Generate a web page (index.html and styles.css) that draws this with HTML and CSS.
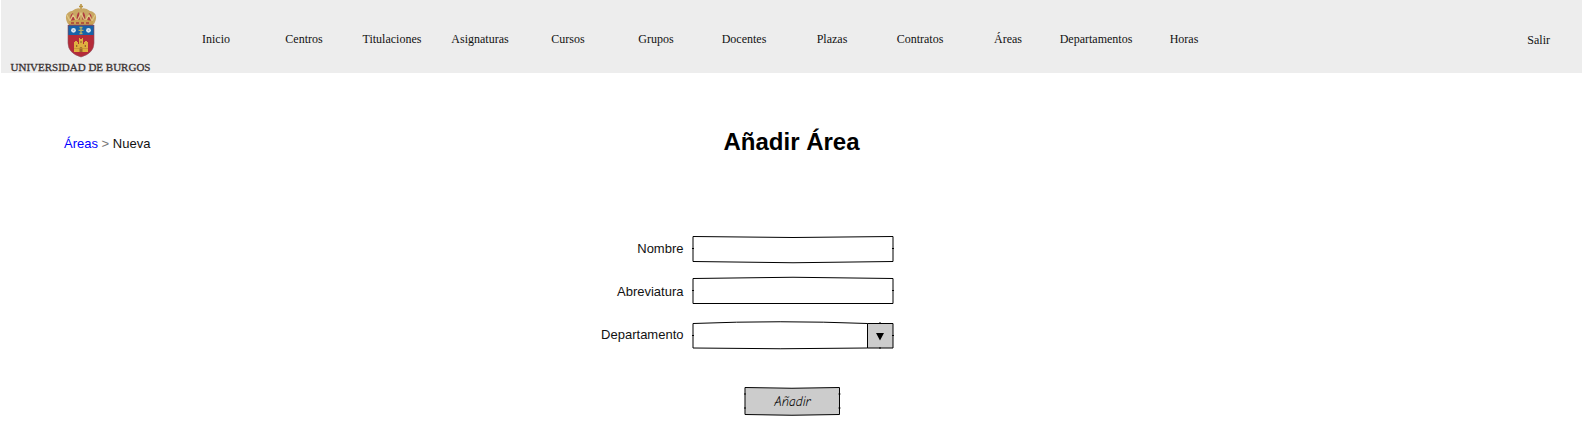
FILE: index.html
```html
<!DOCTYPE html>
<html lang="es">
<head>
<meta charset="utf-8">
<title>Añadir Área</title>
<link rel="stylesheet" href="styles.css">
</head>
<body>
<header class="topbar">
  <div class="brand">
    <svg class="crest" viewBox="0 0 32 54" aria-hidden="true">
      <path d="M16 0v6M14 2.500h4" stroke="#b99443" stroke-width="1.600"/>
      <path d="M3 20C-1 13 1 8 7 7Q12 3 16 5Q20 3 25 7C31 8 33 13 29 20Z" fill="#c9a764"/>
      <path d="M6 17Q4 11 8 9Q9 13 10 17ZM12 17Q11 10 14 8L15 17ZM20 17Q21 10 18 8L17 17ZM26 17Q28 11 24 9Q23 13 22 17Z" fill="#b03a40"/>
      <path d="M2 11l3 6 3-6 4 6 4-8 4 8 4-6 3 6 3-6" fill="none" stroke="#e0c884" stroke-width="1.200"/>
      <path d="M4 17Q16 14 28 17V21H4Z" fill="#c8a052"/>
      <path d="M6 19h20" stroke="#a83d38" stroke-width="1.500" stroke-dasharray="3 2"/>
      <path d="M3 21H29V39Q29 49 16 53Q3 49 3 39Z" fill="#b52b39" stroke="#8e5260" stroke-width=".6"/>
      <path d="M3.300 21.500H28.700V31H3.300Z" fill="#1763a8"/>
      <g fill="#dce6ef"><circle cx="8.500" cy="26.300" r="2.400"/><circle cx="23.500" cy="26.300" r="2.400"/></g>
      <g fill="#8fb0cc"><circle cx="8.500" cy="26.300" r=".8"/><circle cx="23.500" cy="26.300" r=".8"/></g>
      <path d="M16 23v7M13.500 26.300h5M14.500 23.500h3M14.500 29.500h3" stroke="#b7ae62" stroke-width="1.300"/>
      <path d="M9 48V38h1v-1h2v1h1v2h1v-6h1v1h2v-1h1v6h1v-2h1v-1h2v1h1V48Z" fill="#dfb040"/>
      <path d="M14.500 48v-4q1.500-2 3 0v4ZM11 41h1.300v2H11ZM19.700 41H21v2h-1.300ZM15.400 37h1.200v2h-1.200Z" fill="#9b6a2b"/>
      <path d="M9 44.500h14" stroke="#c18d35" stroke-width=".7"/>
    </svg>
    <span class="brand-name">UNIVERSIDAD DE BURGOS</span>
  </div>
  <nav class="menu">
    <a href="#">Inicio</a>
    <a href="#">Centros</a>
    <a href="#">Titulaciones</a>
    <a href="#">Asignaturas</a>
    <a href="#">Cursos</a>
    <a href="#">Grupos</a>
    <a href="#">Docentes</a>
    <a href="#">Plazas</a>
    <a href="#">Contratos</a>
    <a href="#">Áreas</a>
    <a href="#">Departamentos</a>
    <a href="#">Horas</a>
  </nav>
  <a class="logout" href="#">Salir</a>
</header>
<main>
  <div class="heading">
    <div class="breadcrumb"><a href="#">Áreas</a> <span class="sep">&gt;</span> <span>Nueva</span></div>
    <h1>Añadir Área</h1>
  </div>
  <form class="form">
    <label for="nombre">Nombre</label>
    <div class="field">
      <svg class="sketch" viewBox="0 0 202 28" preserveAspectRatio="none" aria-hidden="true">
        <path class="line" d="M1 1.500Q101 3.500 201 1.500V26.500Q101 29 1 26.500Z"/>
        <path class="line" d="M0 13.500h2M200 13.500h2"/>
      </svg>
      <input id="nombre" type="text">
    </div>
    <label for="abreviatura">Abreviatura</label>
    <div class="field">
      <svg class="sketch" viewBox="0 0 202 28" preserveAspectRatio="none" aria-hidden="true">
        <path class="line" d="M1 .5Q101 -2 201 .5V25.500H1Z"/>
        <path class="line" d="M0 12.500h2M200 12.500h2"/>
      </svg>
      <input id="abreviatura" type="text">
    </div>
    <label for="departamento">Departamento</label>
    <div class="field">
      <svg class="sketch" viewBox="0 0 202 28" preserveAspectRatio="none" aria-hidden="true">
        <path class="fill" d="M175.500 2.500H201V27H175.500Z"/>
        <path class="line" d="M1 2.500Q88 -1 175.500 2.500H201V27H175.500Q88 28.500 1 27ZM175.500 2.500V27"/>
        <path class="line" d="M0 14.500h2M200 14.500h2M188 1v2M188 26v2"/>
        <path d="M184 12h8l-4 7.500Z"/>
      </svg>
      <select id="departamento"><option></option></select>
    </div>
    <div class="actions">
      <button type="button">
        <svg class="sketch" viewBox="0 0 97 30" preserveAspectRatio="none" aria-hidden="true">
          <path class="fill line" d="M1 1.500Q48 3 96 1.500V28.500Q48 30 1 28.500Z"/>
          <path class="line" d="M0 8h2M0 22h2M95 8h2M95 22h2"/>
        </svg>
        <span class="caption">Añadir</span>
      </button>
    </div>
  </form>
</main>
</body>
</html>
```
FILE: styles.css
```css
* {
  box-sizing: border-box;
}

body {
  margin: 0;
  padding-left: 1px;
  background: #fff;
  color: #111;
  font-family: "Liberation Sans", Arial, sans-serif;
  font-size: 13px;
  line-height: 16px;
}

a {
  color: inherit;
  text-decoration: none;
}

.topbar {
  display: flex;
  align-items: center;
  min-height: 73px;
  padding-right: 32px;
  background: #ededed;
  font-family: "Liberation Serif", "Times New Roman", serif;
  font-size: 12px;
}

.brand {
  display: flex;
  flex-direction: column;
  align-items: center;
  align-self: stretch;
  width: 159px;
  padding-top: 4px;
}

.crest {
  width: 32px;
  height: 54px;
}

.brand-name {
  padding-top: 4px;
  font-size: 11px;
  line-height: 11px;
  white-space: nowrap;
  color: #3a3333;
  -webkit-text-stroke: 0.3px #3a3333;
}

.menu {
  display: flex;
  margin: 4px auto 0 12px;
}

.menu a {
  width: 88px;
  text-align: center;
}

.logout {
  padding-top: 6px;
}

.heading {
  display: grid;
  grid-template-columns: 1fr auto 1fr;
  align-items: center;
  padding: 53px 0 0;
}

.breadcrumb {
  padding: 4px 0 0 63px;
}

.breadcrumb a {
  color: #00f;
}

.sep {
  color: #777;
}

h1 {
  margin: 0;
  font-size: 24px;
  line-height: 32px;
  color: #000;
}

.form {
  display: grid;
  grid-template-columns: 1fr 202px 1fr;
  gap: 15px 8px;
  align-items: center;
  padding: 77px 0 24px 2px;
}

.form label {
  grid-column: 1;
  text-align: right;
}

.field {
  position: relative;
  grid-column: 2;
  height: 28px;
}

.sketch {
  position: absolute;
  inset: 0;
  width: 100%;
  height: 100%;
  overflow: visible;
}

.line {
  fill: none;
  stroke: #000;
  stroke-width: 1;
}

.fill,
.fill.line {
  fill: #ccc;
}

.field input,
.field select {
  position: relative;
  display: block;
  width: 100%;
  height: 100%;
  padding: 0 6px;
  border: 0;
  background: transparent;
  font: inherit;
  appearance: none;
}

.actions {
  grid-column: 2;
  padding-top: 22px;
  text-align: center;
}

.actions button {
  position: relative;
  padding: 8px 30px 6px;
  border: 0;
  background: none;
  font-family: "Comic Neue", "Liberation Sans", sans-serif;
  font-size: 13px;
  font-style: italic;
  line-height: 16px;
  color: #111;
}

.caption {
  position: relative;
}
```
